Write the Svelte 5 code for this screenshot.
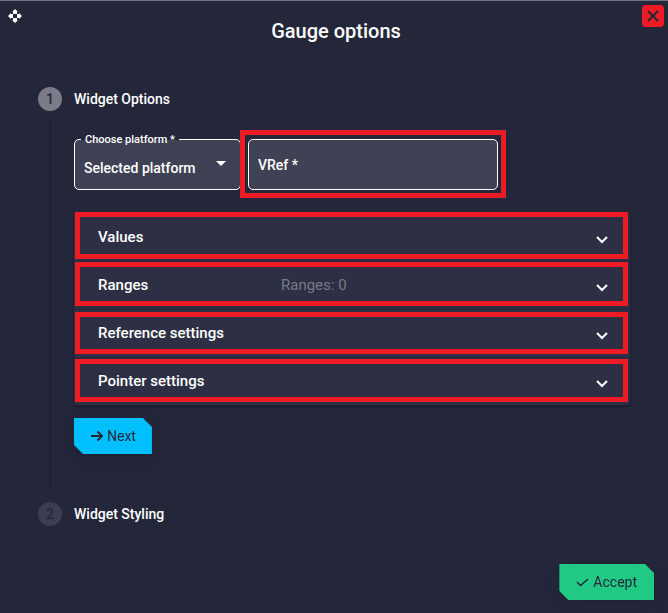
<script lang="ts">
  let platform = $state('');
  let vref = $state('');
  let open = $state('');

  const panels = [
    { title: 'Values', note: '' },
    { title: 'Ranges', note: 'Ranges: 0' },
    { title: 'Reference settings', note: '' },
    { title: 'Pointer settings', note: '' },
  ];

  function toggle(title: string) {
    open = open === title ? '' : title;
  }
</script>

<div class="dialog" role="dialog" aria-labelledby="dialog-title">
  <header>
    <button class="move" aria-label="Move">
      <svg width="14" height="14" viewBox="0 0 14 14" fill="currentColor">
        <path d="M7 0l3 3H9v2H5V3H4zM7 14l3-3H9V9H5v2H4zM0 7l3-3v1h2v4H3v1zM14 7l-3-3v1H9v4h2v1z" />
      </svg>
    </button>
    <h1 id="dialog-title">Gauge options</h1>
    <button class="close" aria-label="Close">
      <svg width="12" height="12" viewBox="0 0 12 12" fill="none" stroke="currentColor" stroke-width="2">
        <path d="M1.5 1.5l9 9M10.5 1.5l-9 9" stroke-linecap="round" />
      </svg>
    </button>
  </header>

  <ol class="steps">
    <li>
      <div class="step-head">
        <span class="badge active">1</span>
        <h2>Widget Options</h2>
      </div>
      <div class="step-body">
        <div class="fields">
          <div class="platform">
            <label for="platform">Choose platform *</label>
            <select id="platform" bind:value={platform}>
              <option value="">Selected platform</option>
            </select>
            <svg width="10" height="5" viewBox="0 0 10 5" fill="currentColor"><path d="M0 0h10L5 5z" /></svg>
          </div>
          <div class="vref">
            <input type="text" aria-label="VRef" placeholder="VRef *" bind:value={vref} />
          </div>
        </div>

        <div class="accordion">
          {#each panels as panel (panel.title)}
            <button
              class="panel"
              aria-expanded={open === panel.title}
              onclick={() => toggle(panel.title)}
            >
              <span class="title">{panel.title}</span>
              <span class="note">{panel.note}</span>
              <svg width="12" height="8" viewBox="0 0 12 8" fill="none" stroke="currentColor" stroke-width="2">
                <path d="M1 1l5 5 5-5" />
              </svg>
            </button>
          {/each}
        </div>

        <div class="shadow">
          <button class="action next">
            <svg width="12" height="12" viewBox="0 0 12 12" fill="none" stroke="currentColor" stroke-width="2">
              <path d="M0 6h11M6.5 1.5L11 6l-4.5 4.5" />
            </svg>
            Next
          </button>
        </div>
      </div>
    </li>
    <li>
      <div class="step-head">
        <span class="badge">2</span>
        <h2>Widget Styling</h2>
      </div>
    </li>
  </ol>

  <footer class="shadow">
    <button class="action accept">
      <svg width="13" height="10" viewBox="0 0 13 10" fill="none" stroke="currentColor" stroke-width="1.5">
        <path d="M1 5l3.5 3.5L12 2" />
      </svg>
      Accept
    </button>
  </footer>
</div>

<style>
  :global(body) { margin: 0; background: #24263a; }
  .dialog {
    --page: #24263a;
    --field: #3f4254;
    --panel: #2d3044;
    --red: #ed1c24;
    display: flex; flex-direction: column; box-sizing: border-box; min-height: 100vh;
    border-top: 1px solid #6f7484; background: var(--page); color: #fff;
    font: 500 14px/20px Roboto, sans-serif;
  }
  button, input, select { font: inherit; color: inherit; margin: 0; border: 0; padding: 0; box-sizing: border-box; }
  button { background: none; cursor: pointer; }
  svg { display: block; flex: none; }
  h1, h2 { margin: 0; font-weight: 500; }

  header { display: grid; grid-template-columns: 40px 1fr 32px; align-items: start; padding: 4px 4px 0 0; }
  .move { width: 14px; height: 14px; margin: 4px 0 0 8px; }
  .close {
    display: grid; place-items: center; justify-self: end; width: 22px; height: 22px;
    border-radius: 4px; background: var(--red); color: var(--page);
  }
  h1 { padding-top: 14px; font-size: 20px; line-height: 24px; text-align: center; }

  .steps { flex: 1; list-style: none; margin: 0; padding: 44px 38px 0; }
  .step-head { display: flex; align-items: center; gap: 12px; height: 24px; }
  h2 { font-size: 14px; }
  .badge {
    width: 24px; height: 24px; border-radius: 50%; background: #3b3d50; color: var(--page);
    line-height: 24px; text-align: center;
  }
  .badge.active { background: #7b7c88; }
  .step-body { position: relative; margin-bottom: 8px; padding: 19px 0 40px 36px; }
  .step-body::before {
    content: ''; position: absolute; left: 12px; top: 8px; bottom: 0; width: 1px; background: #1d1f30;
  }

  .fields { display: flex; align-items: flex-start; }
  .platform { position: relative; flex: 0 1 167px; margin-top: 9px; }
  .platform label {
    position: absolute; left: 7px; top: -8px; padding: 0 4px; font-size: 11px; line-height: 18px;
    background: linear-gradient(var(--page) 50%, var(--field) 50%);
  }
  .platform svg { position: absolute; right: 15px; top: 22px; pointer-events: none; }
  select, input { display: block; width: 100%; height: 51px; border: 1px solid #fff; border-radius: 5px; background: var(--field); }
  select { appearance: none; padding: 6px 32px 0 9px; }
  input { padding: 0 9px; }
  input::placeholder { color: #fff; opacity: 1; }
  .vref { position: relative; flex: 0 1 266px; box-sizing: border-box; border: 5px solid var(--red); padding: 4px 3px 3px; margin-left: -1px; }

  .accordion { margin-top: 15px; border-radius: 4px; background: var(--panel); box-shadow: 0 2px 3px #1a1c2c; }
  .panel {
    position: relative; display: flex; align-items: center; width: 100%; height: 48px;
    padding: 0 22px 0 24px; font-size: 15px; text-align: left;
  }
  .panel + .panel { box-shadow: inset 0 1px #25273a; }
  /* highlight frames */
  .panel::after { content: ''; position: absolute; inset: 3px 2px 3px 1px; border: 5px solid var(--red); }
  .panel:first-child::after { inset: -1px 2px 2px 1px; }
  .panel:nth-child(2)::after { inset: 1px 2px 3px 1px; }
  .panel:last-child::after { inset: 2px 2px 3px 1px; }
  .title { flex: 0 0 183px; }
  .note { flex: 1; color: #777985; font-weight: 400; }
  .panel svg { margin-top: 6px; }
  .panel[aria-expanded='true'] svg { transform: rotate(180deg); }

  .shadow { filter: drop-shadow(0 4px 6px #1b1d2d80); }
  .step-body .shadow { margin-top: 13px; }
  .action {
    display: flex; align-items: center; height: 36px; padding: 0 16px 0 17px; gap: 4px;
    color: var(--page); font-weight: 400;
    clip-path: polygon(0 0, calc(100% - 9px) 0, 100% 9px, 100% 100%, 9px 100%, 0 calc(100% - 9px));
  }
  .next { background: #00bfff; }
  .accept { padding-right: 17px; background: #20c984; }
  footer { display: flex; justify-content: flex-end; padding: 0 14px 13px; }
</style>
